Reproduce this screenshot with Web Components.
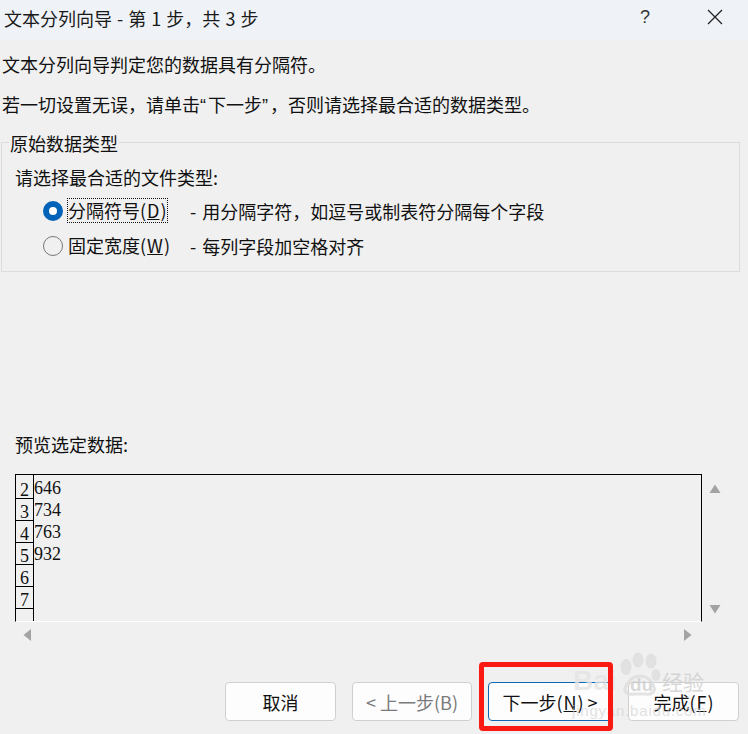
<!DOCTYPE html>
<html lang="zh">
<head>
<meta charset="utf-8">
<title>文本分列向导</title>
<style>
  html, body { margin: 0; padding: 0; background: #f0f0f0; }
  body { font-family: "Noto Sans CJK SC", "Liberation Sans", sans-serif; color: #111; overflow: hidden; }
  u { padding: 0 1px; }
</style>
</head>
<body>
<wizard-dialog>
  <wizard-titlebar slot="title">文本分列向导 - 第 1 步，共 3 步</wizard-titlebar>
  <wizard-group slot="group" legend="原始数据类型">
    <div style="font-size:18px;line-height:24px;margin-bottom:4px">请选择最合适的文件类型:</div>
    <wizard-radio checked focused note="- 用分隔字符，如逗号或制表符分隔每个字段">分隔符号(<u>D</u>)</wizard-radio>
    <wizard-radio note="- 每列字段加空格对齐">固定宽度(<u>W</u>)</wizard-radio>
  </wizard-group>
  <wizard-preview slot="preview"></wizard-preview>
  <wizard-button slot="buttons">取消</wizard-button>
  <wizard-button slot="buttons" disabled>&lt; 上一步(B)</wizard-button>
  <wizard-button slot="buttons" primary>下一步(<u>N</u>) &gt;</wizard-button>
  <wizard-button slot="buttons">完成(<u>F</u>)</wizard-button>
</wizard-dialog>

<script>
(function(){
  const shadow = (el, html) => {
    const t = document.createElement('template');
    t.innerHTML = html;
    el.attachShadow({mode: 'open'}).appendChild(t.content.cloneNode(true));
  };

  class WizardDialog extends HTMLElement {
    constructor() {
      super();
      shadow(this, `
        <style>
          :host { display: block; position: relative; width: 748px; height: 734px; overflow: hidden; background: #f0f0f0; }
          .content { padding: 0 8px 0 1px; }
          p { margin: 0; font-size: 18px; line-height: 24px; padding-left: 1px; white-space: nowrap; }
          .p1 { padding-top: 12px; }
          .p2 { padding-top: 16px; margin-bottom: 26px; }
          .q { font-family: "Liberation Sans", sans-serif; letter-spacing: 2px; line-height: 0; }
          .buttons { display: flex; position: absolute; left: 225px; top: 682px; gap: 16px; }
          .red { position: absolute; left: 479px; top: 662px; width: 124px; height: 59px; border: 5px solid #fb1a13; border-radius: 4px; }
          .wm { position: absolute; font-family: "Liberation Sans", sans-serif; white-space: nowrap; pointer-events: none; }
          svg.paw { position: absolute; left: 618px; top: 652px; }
        </style>
        <slot name="title"></slot>
        <div class="content">
          <p class="p1">文本分列向导判定您的数据具有分隔符。</p>
          <p class="p2">若一切设置无误，请单击<span class="q">“</span>下一步<span class="q">”</span>，否则请选择最合适的数据类型。</p>
          <slot name="group"></slot>
          <slot name="preview"></slot>
        </div>
        <div class="buttons"><slot name="buttons"></slot></div>
        <div class="wm" style="left:573px;top:665px;font-size:28px;font-weight:700;color:rgba(228,228,228,.8)">Bai</div>
        <div class="wm" style="left:630px;top:674px;font-size:19px;font-weight:700;color:rgba(205,205,205,.75)">du</div>
        <div class="wm" style="left:662px;top:666px;font-size:21px;color:rgba(205,205,205,.8);font-family:'Noto Sans CJK SC',sans-serif">经验</div>
        <div class="wm" style="left:572px;top:702px;font-size:15px;letter-spacing:.8px;color:rgba(205,205,205,.6)">jingyan.baidu.com</div>
        <svg class="paw" width="46" height="44" viewBox="0 0 46 44" fill="rgba(222,222,222,.85)">
          <ellipse cx="8" cy="15" rx="5.5" ry="8"/>
          <ellipse cx="20" cy="8" rx="5.5" ry="7.5"/>
          <ellipse cx="33" cy="9" rx="5.5" ry="7.5"/>
          <ellipse cx="38" cy="23" rx="4.5" ry="6"/>
          <path d="M22 24c-7 0-13 6-15 12-1 5 4 7 9 6h12c5 1 10-2 8-7-2-6-7-11-14-11z" fill="none" stroke="rgba(222,222,222,.85)" stroke-width="3"/>
        </svg>
        <div class="red"></div>
      `);
    }
  }

  class WizardTitlebar extends HTMLElement {
    constructor() {
      super();
      shadow(this, `
        <style>
          :host { display: flex; align-items: center; height: 40px; background: #eff3f8; font-size: 18px; word-spacing: 1px; color: #1a1a1a; }
          .t { flex: 1; padding-left: 4px; margin-top: -4px; white-space: nowrap; }
          .help { width: 20px; text-align: center; font-size: 18px; font-family: "Liberation Sans", sans-serif; color: #333; margin-right: 52px; margin-top: -6px; }
          svg { margin-right: 25px; margin-top: -6px; }
        </style>
        <div class="t"><slot></slot></div>
        <div class="help">?</div>
        <svg width="16" height="16" viewBox="0 0 16 16"><path d="M1 1l14 14M15 1L1 15" stroke="#222" stroke-width="1.3" fill="none"/></svg>
      `);
    }
  }

  class WizardGroup extends HTMLElement {
    constructor() {
      super();
      shadow(this, `
        <style>
          :host { display: block; position: relative; width: 737px; height: 128px; border: 1px solid #dcdcdc; }
          .legend { position: absolute; left: 7px; top: -11px; background: #f0f0f0; padding: 0 1px; font-size: 18px; line-height: 22px; }
          .body { padding: 22px 0 0 13px; }
        </style>
        <div class="legend"></div>
        <div class="body"><slot></slot></div>
      `);
      this.shadowRoot.querySelector('.legend').textContent = this.getAttribute('legend');
    }
  }

  class WizardRadio extends HTMLElement {
    constructor() {
      super();
      shadow(this, `
        <style>
          :host { display: flex; align-items: center; height: 35px; padding-left: 28px; font-size: 18px; white-space: nowrap; }
          .dot { width: 20px; height: 20px; box-sizing: border-box; border-radius: 50%; border: 1.5px solid #777; flex: none; }
          :host([checked]) .dot { border: 6px solid #0063b8; background: #fff; }
          .label { margin-left: 4px; width: 101px; height: 25px; line-height: 25px; box-sizing: border-box; padding-left: 1px; flex: none; }
          :host([focused]) .label { outline: 1px dotted #111; outline-offset: -1px; }
          .note { margin-left: 22px; word-spacing: 2px; }
        </style>
        <span class="dot"></span>
        <span class="label"><slot></slot></span>
        <span class="note"></span>
      `);
      this.shadowRoot.querySelector('.note').textContent = this.getAttribute('note');
    }
  }

  class WizardPreview extends HTMLElement {
    constructor() {
      super();
      const rows = [['2','646'],['3','734'],['4','763'],['5','932'],['6',''],['7',''],['','']];
      const head = rows.map(r => `<div class="n">${r[0]}</div>`).join('');
      const data = rows.map(r => `<div class="d">${r[1]}</div>`).join('');
      const tri = (pts) => `<svg width="14" height="14" viewBox="0 0 14 14"><polygon points="${pts}" fill="#a3a3a3"/></svg>`;
      shadow(this, `
        <style>
          :host { display: block; margin: 160px 0 0 14px; }
          .cap { font-size: 18px; line-height: 24px; margin-bottom: 18px; }
          .wrap { display: flex; align-items: flex-start; }
          .box { display: flex; width: 687px; height: 148px; box-sizing: border-box; border: 1px solid #000; border-bottom: 1px solid #fff; overflow: hidden; font-family: "Liberation Serif", serif; font-size: 18px; color: #111; }
          .col { width: 17px; border-right: 1px solid #000; flex: none; padding-top: 2px; }
          .n { height: 21px; border-bottom: 1px solid #000; text-align: center; line-height: 27px; overflow: hidden; }
          .n:last-child { border-bottom: 0; }
          .d { height: 22px; line-height: 26px; }
          .side { display: flex; flex-direction: column; justify-content: space-between; height: 148px; margin-left: 6px; padding: 7px 0 5px; box-sizing: border-box; }
          .hbar { display: flex; justify-content: space-between; width: 672px; margin: 6px 0 0 7px; }
          svg { display: block; }
        </style>
        <div class="cap">预览选定数据:</div>
        <div class="wrap">
          <div class="box"><div class="col">${head}</div><div>${data}</div></div>
          <div class="side">${tri('1.5,12 7,3.5 12.5,12')}${tri('1.5,2 12.5,2 7,10.5')}</div>
        </div>
        <div class="hbar">${tri('9,1 9,13 1.5,7')}${tri('4,1 4,13 11.5,7')}</div>
      `);
    }
  }

  class WizardButton extends HTMLElement {
    constructor() {
      super();
      shadow(this, `
        <style>
          :host { display: flex; align-items: center; justify-content: center; width: 111px; height: 39px; box-sizing: border-box; background: #fdfdfd; border: 1px solid #d0d0d0; border-radius: 4px; font-size: 18px; color: #111; white-space: nowrap; }
          :host([disabled]) { color: #7a7a7a; width: 120px; }
          :host([primary]) { width: 124px; border-color: #0a68b4; }
        </style>
        <slot></slot>
      `);
    }
  }

  customElements.define('wizard-dialog', WizardDialog);
  customElements.define('wizard-titlebar', WizardTitlebar);
  customElements.define('wizard-group', WizardGroup);
  customElements.define('wizard-radio', WizardRadio);
  customElements.define('wizard-preview', WizardPreview);
  customElements.define('wizard-button', WizardButton);
})();
</script>
</body>
</html>
